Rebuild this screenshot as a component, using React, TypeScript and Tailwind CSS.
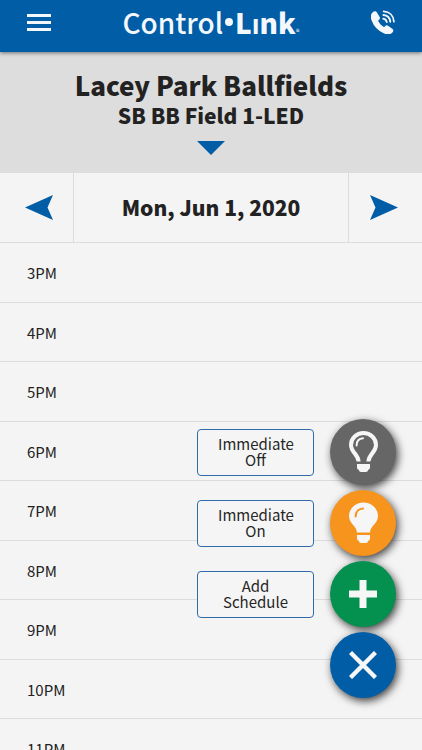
import React from "react";

const hours = ["3PM", "4PM", "5PM", "6PM", "7PM", "8PM", "9PM", "10PM", "11PM"];

function PhoneIcon() {
  return (
    <svg viewBox="0 0 24 24" className="size-6" fill="none" aria-hidden="true">
      <path
        d="M2.6 2.3 C0.4 3.8 -0.2 6.6 1.2 10.4 C3.2 15.8 8 20.8 13.4 22.9 C17.2 24.4 19.4 24 21.2 21.9 C22 20.9 21.9 20 20.9 19.2 L17 16.4 C16 15.7 15.1 15.8 14.4 16.7 L13.3 18 C10.4 16.6 7.5 13.5 6.3 10.6 L7.6 9.5 C8.4 8.8 8.6 8 8 7 L5.6 3 C4.8 1.7 3.8 1.5 2.6 2.3 Z"
        fill="#f4f8fc"
        stroke="#f4f8fc"
        strokeWidth="1.2"
      />
      <path
        d="M12.2 8.6 C14.3 8.9 15.4 10 15.8 12.2 M12.4 5 C16.4 5.3 18.9 7.8 19.3 11.9 M12.6 1.4 C18.5 1.7 22.5 5.6 22.9 11.6"
        stroke="#f4f8fc"
        strokeWidth="1.8"
        strokeLinecap="round"
      />
    </svg>
  );
}

function BulbIcon({ lit }: { lit: boolean }) {
  return (
    <svg viewBox="0 0 29 42" className="h-[42px] w-[29px]" fill="none" aria-hidden="true">
      {lit ? (
        <>
          <path
            d="M8 30.5 C7.5 23.5 0 21.5 0 14 A14.5 13.6 0 0 1 29 14 C29 21.5 21.5 23.5 21 30.5 Z"
            fill="#f6f6f6"
          />
          <path d="M6.6 14.5 C6.6 9.6 9.8 6.8 14 6.6" stroke="#f7941e" strokeWidth="2" strokeLinecap="round" />
        </>
      ) : (
        <>
          <path
            d="M9.6 30.5 C9.2 23 2 21.5 2 14 A12.5 12 0 0 1 27 14 C27 21.5 19.8 23 19.4 30.5"
            stroke="#f6f6f6"
            strokeWidth="4"
          />
          <path d="M7.6 14.5 C7.6 10 10.2 7.4 14 7.2" stroke="#f6f6f6" strokeWidth="2" strokeLinecap="round" />
        </>
      )}
      <path
        d="M8 33 H21 V36.5 C21 37.8 20.4 38.4 19.2 38.8 C18.8 40.4 18.2 41 17 41 H12 C10.8 41 10.2 40.4 9.8 38.8 C8.6 38.4 8 37.8 8 36.5 Z"
        fill="#f6f6f6"
      />
    </svg>
  );
}

function Fab({ color, label, children }: { color: string; label: string; children: React.ReactNode }) {
  return (
    <button
      type="button"
      aria-label={label}
      className={`flex size-[66px] items-center justify-center rounded-full shadow-[2px_3px_9px_rgba(0,0,0,0.75)] ${color}`}
    >
      {children}
    </button>
  );
}

function Action({ text, color, children }: { text: string; color: string; children: React.ReactNode }) {
  return (
    <div className="flex items-center gap-4">
      <button
        type="button"
        className="h-[47px] w-[117px] rounded border border-[#2f6ba8] bg-[#f5f5f5] px-5 text-[15px] leading-4 text-[#262626]"
      >
        {text}
      </button>
      <Fab color={color} label={text}>
        {children}
      </Fab>
    </div>
  );
}

export default function App() {
  return (
    <div className="relative flex h-screen flex-col overflow-hidden bg-[#f4f4f4] font-['Noto_Sans_CJK_SC',sans-serif] text-[#222222]">
      <header className="relative z-10 flex h-[52px] shrink-0 items-center justify-between bg-[#005da6] px-[27px] shadow-[0_1px_4px_rgba(0,0,0,0.5)]">
        <button type="button" aria-label="Menu" className="flex w-6 flex-col gap-1 pb-2">
          <span className="h-[3px] bg-[#f4f8fc]" />
          <span className="h-[3px] bg-[#f4f8fc]" />
          <span className="h-[3px] bg-[#f4f8fc]" />
        </button>
        <div className="flex items-center pb-2 text-[28px] leading-8 text-[#f4f8fc]">
          <span className="font-medium">Control</span>
          <span className="mx-0.5 size-2 rounded-full bg-[#f4f8fc]" />
          <span className="font-black">Lınk</span>
          <span className="self-end text-[8px] leading-3">®</span>
        </div>
        <button type="button" aria-label="Call" className="pb-2">
          <PhoneIcon />
        </button>
      </header>

      <section className="flex h-[121px] shrink-0 flex-col items-center bg-[#dddddd] pt-[17px] text-center font-black">
        <h1 className="text-[26px] leading-8">Lacey Park Ballfields</h1>
        <h2 className="text-[21px] leading-7">SB BB Field 1-LED</h2>
        <button type="button" aria-label="Choose field" className="mt-3">
          <svg viewBox="0 0 28 14" className="h-[14px] w-7" aria-hidden="true">
            <path d="M0 0 H28 L14 14 Z" fill="#005da6" />
          </svg>
        </button>
      </section>

      <nav className="flex h-[70px] shrink-0 border-b border-[#dcdcdc]">
        <button type="button" aria-label="Previous day" className="flex w-[74px] items-center justify-center border-r border-[#dcdcdc] pl-1">
          <svg viewBox="0 0 28 25" className="h-[25px] w-7" aria-hidden="true">
            <path d="M0 12.5 L28 0 L22.5 12.5 L28 25 Z" fill="#005da6" />
          </svg>
        </button>
        <div className="flex flex-1 items-center justify-center pb-0.5 text-[21px] leading-7 font-black">Mon, Jun 1, 2020</div>
        <button type="button" aria-label="Next day" className="flex w-[74px] items-center justify-center border-l border-[#dcdcdc] pr-1">
          <svg viewBox="0 0 28 25" className="h-[25px] w-7" aria-hidden="true">
            <path d="M28 12.5 L0 0 L5.5 12.5 L0 25 Z" fill="#005da6" />
          </svg>
        </button>
      </nav>

      <ul>
        {hours.map((hour) => (
          <li key={hour} className="flex h-[60px] items-center border-b border-[#dcdcdc] pt-0.5 pl-[27px] text-[15px] even:h-[59px]">
            {hour}
          </li>
        ))}
      </ul>

      <div className="absolute right-[26px] bottom-[52px] z-20 flex flex-col items-end gap-[5px]">
        <Action text="Immediate Off" color="bg-[#666666]">
          <BulbIcon lit={false} />
        </Action>
        <Action text="Immediate On" color="bg-[#f7941e]">
          <BulbIcon lit />
        </Action>
        <Action text="Add Schedule" color="bg-[#049150]">
          <svg viewBox="0 0 28 28" className="size-7" aria-hidden="true">
            <path d="M14 0 V28 M0 14 H28" stroke="#f6f6f6" strokeWidth="7" />
          </svg>
        </Action>
        <Fab color="bg-[#005da6]" label="Close">
          <svg viewBox="0 0 28 28" className="size-7" aria-hidden="true">
            <path d="M1.5 1.5 L26.5 26.5 M26.5 1.5 L1.5 26.5" stroke="#f6f6f6" strokeWidth="4.4" />
          </svg>
        </Fab>
      </div>
    </div>
  );
}
